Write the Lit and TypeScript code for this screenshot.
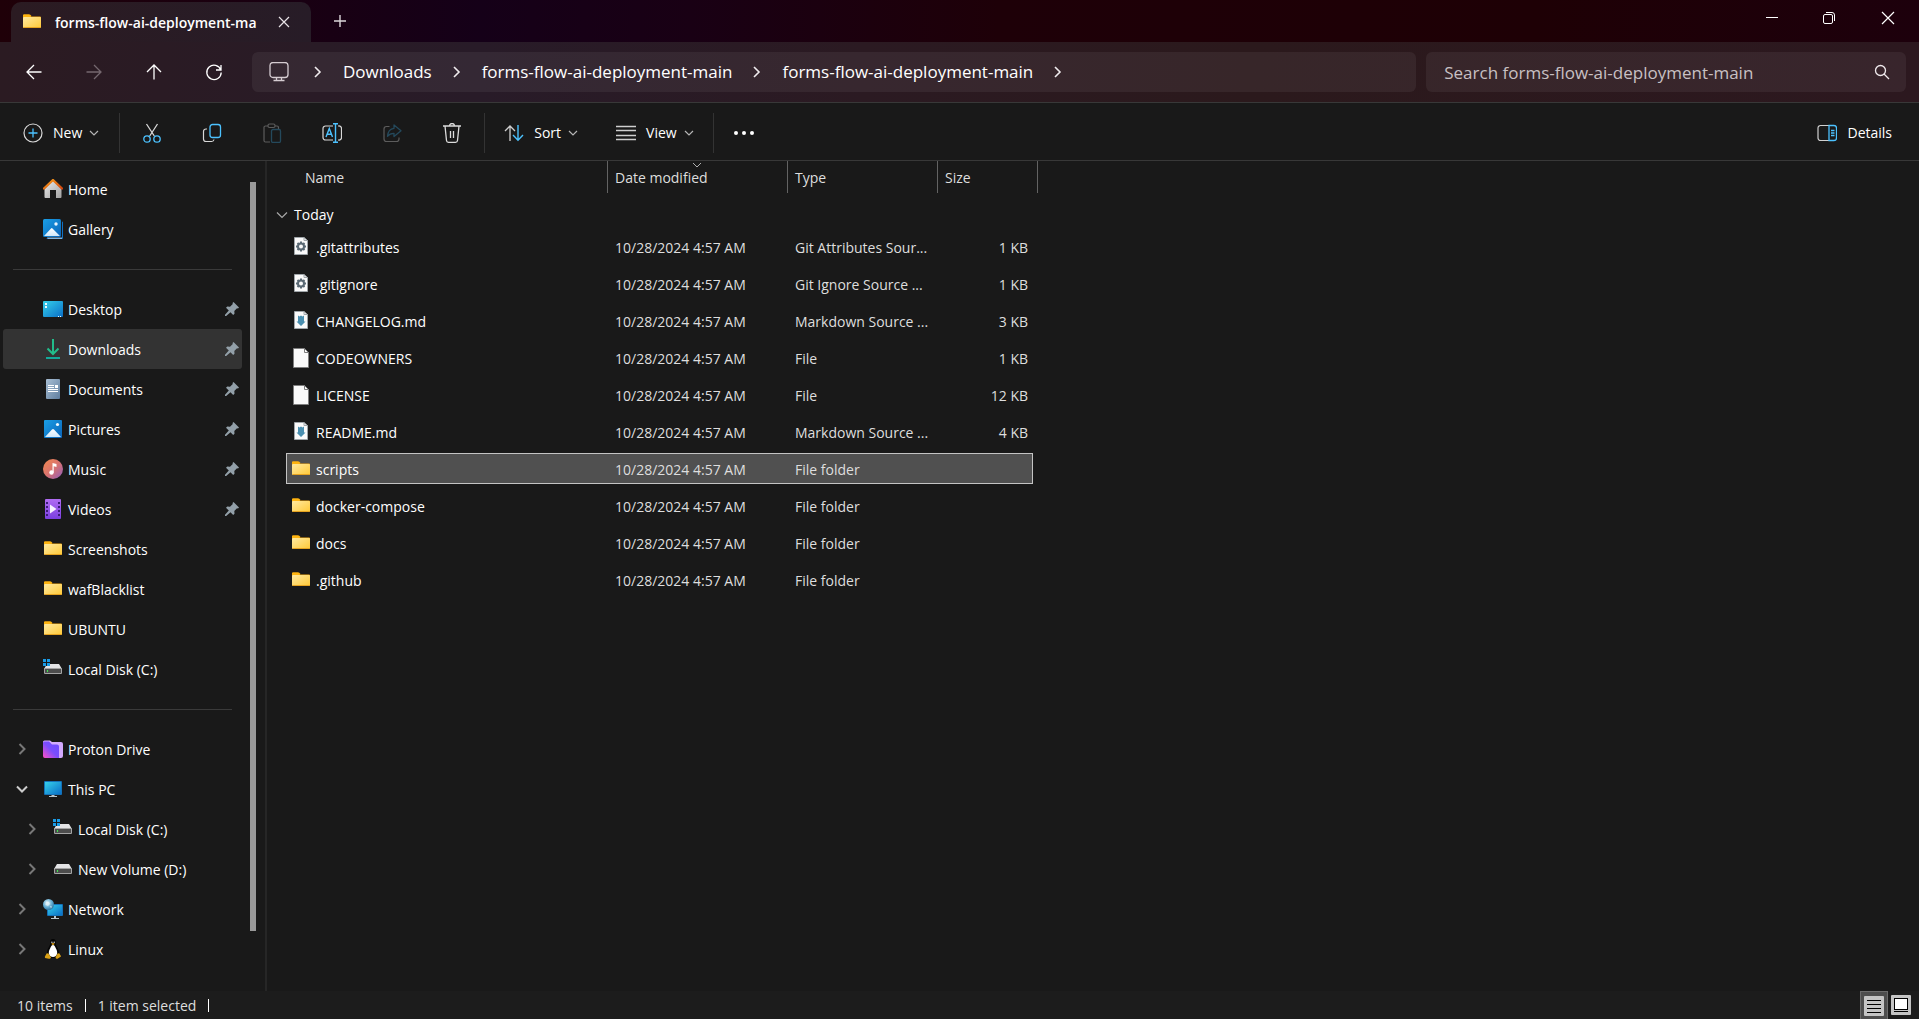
import { LitElement, html, svg, css, nothing, type TemplateResult } from "lit";
import { customElement, state } from "lit/decorators.js";
import { classMap } from "lit/directives/class-map.js";

const BLUE = "#4cc2ff";

/* Gradients shared by the coloured icons. */
const gradients = svg`
  <defs>
    <linearGradient id="g-folder" x1="0" y1="0" x2="1" y2="1"><stop offset="0" stop-color="#ffe9a0"/><stop offset="1" stop-color="#ffc937"/></linearGradient>
    <linearGradient id="g-pic" x1="0" y1="0" x2="1" y2="1"><stop offset="0" stop-color="#1a9fe6"/><stop offset="1" stop-color="#0a63b8"/></linearGradient>
    <linearGradient id="g-hill" x1="0" y1="0" x2="0" y2="1"><stop offset="0" stop-color="#ffffff"/><stop offset="1" stop-color="#cfe8fb"/></linearGradient>
    <linearGradient id="g-desk" x1="0" y1="0" x2="1" y2="1"><stop offset="0" stop-color="#35d0ea"/><stop offset="1" stop-color="#0a6fc8"/></linearGradient>
    <linearGradient id="g-roof" x1="0" y1="0" x2="1" y2="1"><stop offset="0" stop-color="#f8a01c"/><stop offset="1" stop-color="#d4460f"/></linearGradient>
    <linearGradient id="g-wall" x1="0" y1="0" x2="1" y2="1"><stop offset="0" stop-color="#ececec"/><stop offset="1" stop-color="#a2a2a2"/></linearGradient>
    <linearGradient id="g-doc" x1="0" y1="0" x2="1" y2="1"><stop offset="0" stop-color="#a9bfd4"/><stop offset="1" stop-color="#5f7e9f"/></linearGradient>
    <linearGradient id="g-music" x1="0" y1="0" x2="1" y2="1"><stop offset="0" stop-color="#f3894d"/><stop offset=".5" stop-color="#d9736f"/><stop offset="1" stop-color="#8d5bbf"/></linearGradient>
    <linearGradient id="g-video" x1="0" y1="0" x2="0" y2="1"><stop offset="0" stop-color="#b06cf2"/><stop offset="1" stop-color="#7b3fe0"/></linearGradient>
    <linearGradient id="g-proton" x1="0" y1="1" x2="1" y2="0"><stop offset="0" stop-color="#ff50c3"/><stop offset=".5" stop-color="#7a4dff"/><stop offset="1" stop-color="#6d4aff"/></linearGradient>
    <radialGradient id="g-globe" cx=".4" cy=".35" r=".7"><stop offset="0" stop-color="#e3f4fb"/><stop offset=".6" stop-color="#5fa9cf"/><stop offset="1" stop-color="#2c6f9b"/></radialGradient>
  </defs>`;

const windowsMark = svg`<path d="M0 0h3v3H0zM4 0h3v3H4zM0 4h3v3H0zM4 4h3v3H4z" fill="#1a9be6"/>`;
const driveBody = svg`
  <path d="M4 5h12l3 5H1z" fill="#e4e4e6"/>
  <rect x="1" y="9" width="18" height="6" rx="1" fill="#a5a5a5"/>
  <rect x="2" y="10" width="16" height="4" fill="#4d4d4d"/>
  <rect x="4" y="11" width="1" height="2" fill="#3bea4c"/>`;
const smallPage = svg`
  <path d="M3.500 1.500h9.500l3.500 3v14h-13z" fill="#fafafa" stroke="#a0a6aa"/>
  <path d="M13 1.500V4.500h3.500" fill="none" stroke="#a0a6aa"/>`;

const tiny = svg`<path d="M2 4l4 4 4-4" fill="none" stroke="#b5b5b5" stroke-width="1.200"/>`;

const icons: Record<string, TemplateResult> = {
  folder: svg`
    <path d="M1 3.500a1 1 0 0 1 1-1h5l2 2h9a1 1 0 0 1 1 1V9H1z" fill="#f5a913"/>
    <rect x="1" y="5" width="18" height="11" rx="1" fill="url(#g-folder)"/>
    <path d="M1 5h7l1.500-1L8 2.500H2a1 1 0 0 0-1 1z" fill="#ffb40f"/>
    <path d="M1.500 15.500h17" stroke="#e6a320" stroke-width="1"/>`,
  home: svg`
    <path d="M10 1.500L1.500 10v8a1 1 0 0 0 1 1H7v-8h6v8h4.500a1 1 0 0 0 1-1v-8z" fill="url(#g-wall)"/>
    <path d="M1 9.500L10 1l9 8.500" fill="none" stroke="url(#g-roof)" stroke-width="2.400" stroke-linecap="round" stroke-linejoin="round"/>`,
  gallery: svg`
    <path d="M19 2.500a1 1 0 0 1 1 1V19a1 1 0 0 1-1 1H4.500a1 1 0 0 1-1-1H19z" fill="#1272c4"/>
    <path d="M4 18.500h15V20H5z" fill="#7fb4e0"/>
    <rect x="0" y="0" width="18" height="18" rx="1.500" fill="url(#g-pic)"/>
    <path d="M1 17l7-7.500a1 1 0 0 1 1.500 0L17 17z" fill="url(#g-hill)"/>
    <circle cx="13" cy="5" r="1.700" fill="#e8f5ff"/>`,
  desktop: svg`
    <rect x="0" y="2" width="20" height="16" rx="1" fill="url(#g-desk)"/>
    <path d="M2 4h2v2H2zM2 7h2v2H2zM15 17h1v1h-1zM17 17h1v1h-1z" fill="#e9fbff"/>`,
  downloads: svg`
    <path d="M10 0v14.500M4.500 9.500l5.500 5.500 5.500-5.500" fill="none" stroke="#22bd8b" stroke-width="2"/>
    <rect x="3" y="18" width="14" height="2" fill="#14a99a"/>`,
  documents: svg`
    <rect x="3" y="0" width="14" height="20" rx="1" fill="url(#g-doc)"/>
    <path d="M5 6.500h6M5 8.500h6M5 10.500h10M5 12.500h10" stroke="#fff" stroke-width="1"/>
    <rect x="12" y="6" width="3" height="3" fill="#fff"/>`,
  pictures: svg`
    <rect x="1" y="1" width="18" height="18" rx="1" fill="url(#g-pic)"/>
    <path d="M2 18l7-7.500a1.300 1.300 0 0 1 2 0L18 18z" fill="url(#g-hill)"/>
    <circle cx="14.500" cy="5.500" r="1.600" fill="#f2faff"/>`,
  music: svg`
    <circle cx="10" cy="10" r="10" fill="url(#g-music)"/>
    <circle cx="8.500" cy="13.500" r="2.200" fill="#fff"/>
    <path d="M9.500 4l4 1v3l-2.800-.7V13.500H9.500z" fill="#fff"/>`,
  videos: svg`
    <rect x="2" y="0" width="16" height="20" rx="1" fill="url(#g-video)"/>
    <path d="M3 3h2v2H3zM3 7h2v2H3zM3 11h2v2H3zM3 15h2v2H3zM15 3h2v2h-2zM15 7h2v2h-2zM15 11h2v2h-2zM15 15h2v2h-2z" fill="#3b1c78"/>
    <path d="M7 5.500v9l6.500-4.500z" fill="#f6efff"/>`,
  drive: svg`<g>${driveBody}</g>`,
  system: svg`<g>${driveBody}<rect x="0" y="0" width="7" height="7" fill="#191919"/>${windowsMark}</g>`,
  proton: svg`
    <path d="M0 3a1.500 1.500 0 0 1 1.500-1.500H7l2 1.500h9A2 2 0 0 1 20 5v12a2 2 0 0 1-2 2H2z" fill="#d3aaff"/>
    <path d="M0 4a1.500 1.500 0 0 1 1.500-1.500H6l3 3h5a2 2 0 0 1 2 2V19H2a2 2 0 0 1-2-2z" fill="url(#g-proton)"/>`,
  pc: svg`
    <rect x="1" y="2" width="18" height="14" rx="1" fill="#1471b8"/>
    <rect x="2" y="3" width="16" height="12" fill="url(#g-desk)"/>
    <path d="M8.500 16h3v1H14v1H6v-1h2.500z" fill="#b8c4cc"/>`,
  network: svg`
    <rect x="4" y="5" width="16" height="12" rx="1" fill="#1471b8"/>
    <rect x="5" y="6" width="14" height="10" fill="url(#g-desk)"/>
    <path d="M11 17h2v2h3v1H8v-1h3z" fill="#b8c4cc"/>
    <circle cx="5.500" cy="5.500" r="5.500" fill="url(#g-globe)"/>
    <path d="M3 2.500l3 .5 1 2-2 2-2.500-1zM7 7l2 .5-1 2z" fill="#eaf6fb" opacity=".7"/>`,
  linux: svg`
    <path d="M10 0C7.500 0 7 2 7.200 4.500 7.200 7 4 9.500 4 14c0 3 2.500 5 6 5s6-2 6-5c0-4.500-3.200-7-3.200-9.500C13 2 12.500 0 10 0z" fill="#050505"/>
    <path d="M10 6c-1.500 0-2 1.500-2.800 3.200C6 11.500 5.500 13 6 15c.5 2 2 3 4 3s3.500-1 4-3c.5-2 0-3.500-1.200-5.800C12 7.500 11.500 6 10 6z" fill="#fff"/>
    <path d="M8.200 4.800L10 4l1.800.8L10 6.300z" fill="#e5a413"/>
    <circle cx="8.900" cy="3.300" r=".7" fill="#ddd"/><circle cx="11.200" cy="3.300" r=".7" fill="#ddd"/>
    <path d="M3.500 14.500l1.800-.3 2.700 4c0 1-1 1.700-2.200 1.500L2 19c-.5-2 .5-2 .8-3zM16.500 14.500l-1.800-.3-2.200 4c0 1 .8 1.700 2 1.500L18 17.500c0-1-1-1.500-1.500-3z" fill="#d9a015"/>`,
  config: svg`<g transform="translate(0 -1)">${smallPage}
    <circle cx="10" cy="10.500" r="3" fill="none" stroke="#5b6a75" stroke-width="2"/>
    <path d="M10 5.500v2M10 13.500v2M5 10.500h2M13 10.500h2M6.500 7l1.200 1.200M12.300 12.800l1.200 1.200M13.500 7l-1.200 1.200M7.700 12.800L6.500 14" stroke="#5b6a75" stroke-width="2"/></g>`,
  markdown: svg`<g transform="translate(0 -1)">${smallPage}
    <path d="M7 5.500l1.500 1L10 5.500l1.500 1L13 5.500v6h1.500L10 16l-4.500-4.500H7z" fill="#4a8fb0"/></g>`,
  file: svg`
    <path d="M2.500 .5h11l4 4v15h-15z" fill="#fafafa" stroke="#7e7e7e"/>
    <path d="M13.500 .5v4h4" fill="none" stroke="#7e7e7e"/>`,
  pin: svg`<path d="M8.500 0L14 5.500l-1 1-1-.2-2.700 2.700.2 2.700-1.300 1.300L5.500 10.300 1.200 14 0 14l0-1.200 3.800-4.200L1 5.800l1.300-1.300 2.700.2L7.800 2l-.3-1z" fill="#93a0a9"/>`,
  chevron: svg`<path d="M7.500 5l5 5-5 5" fill="none" stroke="currentColor" stroke-width="2"/>`,
  chevronDown: svg`<path d="M5 7.500l5 5 5-5" fill="none" stroke="currentColor" stroke-width="2"/>`,
  crumb: svg`<path d="M8 5l5 5-5 5" fill="none" stroke="#f0ecee" stroke-width="1.600"/>`,
  back: svg`<path d="M17.500 10H3M10 3L3 10l7 7" fill="none" stroke="currentColor" stroke-width="1.300"/>`,
  forward: svg`<path d="M2.500 10H17M10 3l7 7-7 7" fill="none" stroke="currentColor" stroke-width="1.300"/>`,
  up: svg`<path d="M10 17.500V3M3 10l7-7 7 7" fill="none" stroke="currentColor" stroke-width="1.300"/>`,
  refresh: svg`<path d="M16.800 8A7.200 7.200 0 1 0 17.200 10.500M17 3v5h-5" fill="none" stroke="currentColor" stroke-width="1.300"/>`,
  monitor: svg`<rect x="1" y="0.500" width="18" height="15" rx="3" fill="none" stroke="#d5ccd1" stroke-width="1.300"/><path d="M7.500 15.500v2.500M12.500 15.500v2.500M4.500 18.500h11" stroke="#d5ccd1" stroke-width="1.300"/>`,
  search: svg`<circle cx="8.500" cy="8.500" r="5" fill="none" stroke="#f0eaed" stroke-width="1.300"/><path d="M12 12l5 5" stroke="#f0eaed" stroke-width="1.300"/>`,
  close: svg`<path d="M5 5l10 10M15 5L5 15" stroke="#e9e4e7" stroke-width="1.200"/>`,
  winClose: svg`<path d="M4 4l12 12M16 4L4 16" stroke="#fff" stroke-width="1.200"/>`,
  plus: svg`<path d="M10 4v12M4 10h12" stroke="#dcd6da" stroke-width="1.400"/>`,
  minimize: svg`<path d="M4 9.500h12" stroke="#fff"/>`,
  restore: svg`<rect x="4.500" y="6.500" width="9" height="9" rx="1.500" fill="none" stroke="#fff"/><path d="M7 4.500h6a2.500 2.500 0 0 1 2.500 2.500v6" fill="none" stroke="#fff"/>`,
  add: svg`<circle cx="10" cy="10" r="9" fill="none" stroke="#d8d8d8" stroke-width="1.200"/><path d="M10 5.500v9M5.500 10h9" stroke="${BLUE}" stroke-width="1.300"/>`,
  cut: svg`<path d="M4.500 1l7.800 12M15.500 1L7.700 13" fill="none" stroke="#d8d8d8" stroke-width="1.300"/><circle cx="5" cy="16" r="3.200" fill="none" stroke="${BLUE}" stroke-width="1.300"/><circle cx="15" cy="16" r="3.200" fill="none" stroke="${BLUE}" stroke-width="1.300"/>`,
  copy: svg`<path d="M5 6H4a2.500 2.500 0 0 0-2.500 2.500V16A2.500 2.500 0 0 0 4 18.500h5.500A2.500 2.500 0 0 0 12 16.500" fill="none" stroke="#d8d8d8" stroke-width="1.200"/><rect x="8" y="1.500" width="10.500" height="13" rx="2.500" fill="none" stroke="${BLUE}" stroke-width="1.300"/>`,
  paste: svg`<path d="M6 3H3.500A1.500 1.500 0 0 0 2 4.500v13A1.500 1.500 0 0 0 3.500 19H8M13 3h2a1.500 1.500 0 0 1 1.500 1.500V6" fill="none" stroke="#5c5c5c" stroke-width="1.200"/><rect x="6" y="1" width="7" height="3.500" rx="1.500" fill="none" stroke="#5c5c5c" stroke-width="1.200"/><rect x="9.500" y="6.500" width="9" height="13" rx="1.500" fill="none" stroke="#24495c" stroke-width="1.300"/>`,
  rename: svg`<path d="M11 3H3.500A2.500 2.500 0 0 0 1 5.500v9A2.500 2.500 0 0 0 3.500 17H11M16 3h.5A2.500 2.500 0 0 1 19.500 5.500v9A2.500 2.500 0 0 1 16.500 17H16" fill="none" stroke="#d8d8d8" stroke-width="1.200"/><path d="M4 14l3.300-8.500L10.500 14M5.200 11.300h4.200M13.500 1v18M11 .7h5M11 19.300h5" fill="none" stroke="${BLUE}" stroke-width="1.400"/>`,
  share: svg`<path d="M7.500 3.500h-3A2.500 2.500 0 0 0 2 6v10a2.500 2.500 0 0 0 2.500 2.500h10A2.500 2.500 0 0 0 17 16v-1.500" fill="none" stroke="#5c5c5c" stroke-width="1.200"/><path d="M12 2l7 5.800-7 5.700V10.300c-3 0-5 1-6.500 3 .3-4 2.500-7.600 6.500-8z" fill="none" stroke="#24495c" stroke-width="1.300" stroke-linejoin="round"/>`,
  trash: svg`<path d="M1 3h18M3 3l1.500 14.500a2 2 0 0 0 2 1.800h7a2 2 0 0 0 2-1.800L17 3M7.500 3a2.500 2.500 0 0 1 5 0M8.500 8v7M11.500 8v7" fill="none" stroke="#dcdcdc" stroke-width="1.300"/>`,
  sort: svg`<path d="M6 18V3M1 8l5-5 5 5" fill="none" stroke="#cfcfcf" stroke-width="1.300"/><path d="M14 2v15M9 12l5 5.200 5-5.200" fill="none" stroke="${BLUE}" stroke-width="1.400"/>`,
  view: svg`<path d="M0 3.500h20M0 7.500h20M0 12.500h20M0 16.500h20" stroke="#cfcfcf" stroke-width="1.300"/>`,
  more: svg`<circle cx="2" cy="10" r="2" fill="#fff"/><circle cx="10" cy="10" r="2" fill="#fff"/><circle cx="18" cy="10" r="2" fill="#fff"/>`,
  details: svg`<path d="M12 2.500H3.500A2.500 2.500 0 0 0 1 5v10a2.500 2.500 0 0 0 2.500 2.500H12" fill="none" stroke="#d0d0d0" stroke-width="1.200"/><path d="M12 2.500h5A2.500 2.500 0 0 1 19.500 5v10a2.500 2.500 0 0 1-2.500 2.500h-5zM14 7.500h3.500M14 10h3.500M14 12.500h3.500" fill="none" stroke="${BLUE}" stroke-width="1.300"/>`,
  listView: svg`<rect width="20" height="20" rx="1" fill="#c4c4c4"/><path d="M3 4.500h14M3 8.500h14M3 12.500h14M3 16.500h14" stroke="#000"/>`,
  tileView: svg`<rect width="20" height="20" rx="1" fill="#c4c4c4"/><rect x="3.500" y="3.500" width="13" height="11" fill="#fff" stroke="#000"/><path d="M3 16.500h14" stroke="#000"/>`,
};

const icon = (name: string, cls = "icon") =>
  html`<svg class=${cls} viewBox=${name === "pin" ? "0 0 14 14" : "0 0 20 20"} aria-hidden="true">${icons[name]}</svg>`;

interface Place {
  label: string;
  icon: string;
  pinned?: boolean;
  expand?: "open" | "closed";
  nested?: boolean;
}

const groups: Place[][] = [
  [
    { label: "Home", icon: "home" },
    { label: "Gallery", icon: "gallery" },
  ],
  [
    { label: "Desktop", icon: "desktop", pinned: true },
    { label: "Downloads", icon: "downloads", pinned: true },
    { label: "Documents", icon: "documents", pinned: true },
    { label: "Pictures", icon: "pictures", pinned: true },
    { label: "Music", icon: "music", pinned: true },
    { label: "Videos", icon: "videos", pinned: true },
    { label: "Screenshots", icon: "folder" },
    { label: "wafBlacklist", icon: "folder" },
    { label: "UBUNTU", icon: "folder" },
    { label: "Local Disk (C:)", icon: "system" },
  ],
  [
    { label: "Proton Drive", icon: "proton", expand: "closed" },
    { label: "This PC", icon: "pc", expand: "open" },
    { label: "Local Disk (C:)", icon: "system", expand: "closed", nested: true },
    { label: "New Volume (D:)", icon: "drive", expand: "closed", nested: true },
    { label: "Network", icon: "network", expand: "closed" },
    { label: "Linux", icon: "linux", expand: "closed" },
  ],
];

const DATE = "10/28/2024 4:57 AM";
const files = [
  { name: ".gitattributes", icon: "config", type: "Git Attributes Sour...", size: "1 KB" },
  { name: ".gitignore", icon: "config", type: "Git Ignore Source ...", size: "1 KB" },
  { name: "CHANGELOG.md", icon: "markdown", type: "Markdown Source ...", size: "3 KB" },
  { name: "CODEOWNERS", icon: "file", type: "File", size: "1 KB" },
  { name: "LICENSE", icon: "file", type: "File", size: "12 KB" },
  { name: "README.md", icon: "markdown", type: "Markdown Source ...", size: "4 KB" },
  { name: "scripts", icon: "folder", type: "File folder", size: "" },
  { name: "docker-compose", icon: "folder", type: "File folder", size: "" },
  { name: "docs", icon: "folder", type: "File folder", size: "" },
  { name: ".github", icon: "folder", type: "File folder", size: "" },
];

@customElement("app-root")
export class AppRoot extends LitElement {
  @state() private selected = "scripts";

  static styles = css`
    :host {
      display: flex;
      flex-direction: column;
      min-height: 100vh;
      background: #191919;
      color: #fff;
      font: 14px/20px "Open Sans", "Noto Sans", sans-serif;
    }
    * { box-sizing: border-box; }
    button, input { font: inherit; color: inherit; background: none; border: 0; margin: 0; padding: 0; }
    button { display: flex; align-items: center; justify-content: center; }
    a { color: inherit; text-decoration: none; }
    ul, ol { list-style: none; margin: 0; padding: 0; }
    svg { display: block; flex: none; }
    .icon { width: 20px; height: 20px; }
    .defs { position: absolute; width: 0; height: 0; }

    .titlebar {
      display: flex;
      height: 42px;
      padding-left: 11px;
      background: linear-gradient(90deg, #1f0008 0, #150018 25%, #190014 36%, #1e0008 52%, #1e0005 80%, #1d000c 100%);
    }
    .tab {
      display: flex;
      align-items: center;
      width: 300px;
      height: 40px;
      margin-top: 2px;
      padding: 0 17px 0 11px;
      border-radius: 10px 10px 0 0;
      background: linear-gradient(90deg, #2b1b22, #271c27);
    }
    .tab-name {
      flex: 1;
      margin-left: 13px;
      padding-top: 2px;
      white-space: nowrap;
      font-weight: 600;
    }
    .new-tab { width: 58px; }
    .window { display: flex; margin-left: auto; }
    .window button { width: 57px; height: 36px; }
    .window button:last-child { width: 62px; }

    .navbar {
      display: flex;
      align-items: center;
      height: 60px;
      padding: 0 13px 0 4px;
      background: linear-gradient(90deg, #2b1b22 0, #281b28 25%, #2b1a22 45%, #2b191c 65%, #2c181f 100%);
    }
    .navbar > button { width: 60px; height: 40px; }
    .navbar > button:disabled { color: #75686f; }
    .address, .search { display: flex; align-items: center; height: 40px; border-radius: 6px; background: rgba(255, 255, 255, 0.06); font-size: 17px; }
    .address { flex: 1; min-width: 0; margin: 0 10px 0 8px; padding-left: 17px; }
    .crumbs { display: flex; align-items: center; margin-left: 18px; }
    .crumbs li { display: flex; align-items: center; }
    .crumbs a { margin: 0 14px 0 16px; }
    .search { flex: 0 1 25vw; padding: 0 14px 0 18px; }
    .search input { flex: 1; min-width: 0; padding-top: 2px; outline: 0; }
    .search input::placeholder { color: #c8c0c3; opacity: 1; }

    .toolbar {
      display: flex;
      align-items: center;
      height: 59px;
      padding: 2px 27px 0 23px;
      border: solid #383838;
      border-width: 1px 0;
    }
    .labelled { gap: 10px; height: 40px; }
    .mini { width: 12px; height: 12px; margin-left: -4px; }
    .bar { width: 1px; height: 40px; background: #333; }
    .tools { display: flex; padding: 0 2px; }
    .tools button { width: 60px; height: 40px; }
    .create { padding-right: 19px; }
    .sorting { display: flex; gap: 37px; padding: 0 18px 0 19px; }
    .overflow { width: 61px; height: 40px; }
    .details { margin-left: auto; }

    .body { display: flex; flex: 1; }
    .sidebar { width: 242px; padding: 8px 0 0 3px; }
    .place { display: flex; align-items: center; height: 40px; padding: 0 3px 0 9px; border-radius: 3px; }
    .place.nested { padding-left: 19px; }
    .place.current { background: #333; }
    .twist { width: 20px; height: 20px; color: #777; margin-right: 11px; }
    .twist.open { color: #ccc; }
    .place a { display: flex; align-items: center; gap: 5px; flex: 1; height: 40px; }
    .place a span, .file-name span { padding-top: 2px; }
    .pin { width: 14px; height: 14px; }
    .divider { height: 40px; padding: 20px 10px 0; }
    .divider::before { content: ""; display: block; height: 1px; background: #3a3a3a; }
    .track { width: 25px; padding: 21px 10px 60px 8px; border-right: 2px solid #262626; display: flex; }
    .thumb { flex: 1; min-width: 6px; background: #999; margin-right: -1px; }

    .main { flex: 1; min-width: 0; padding-left: 19px; }
    table { width: 747px; table-layout: fixed; border-collapse: separate; border-spacing: 0 6px; margin-top: -6px; }
    .col-date { width: 180px; }
    .col-type { width: 150px; }
    .col-size { width: 96px; }
    th, td { padding: 2px 0 0 8px; font-weight: 400; text-align: left; white-space: nowrap; color: #dedede; }
    thead th { position: relative; height: 32px; border-left: 1px solid #636363; padding-left: 7px; }
    thead th:first-child { border-left: 0; padding-left: 19px; }
    thead th:last-child::after { content: ""; position: absolute; left: 99px; top: 0; bottom: 0; width: 1px; background: #636363; }
    .sorted { position: absolute; left: 82px; top: -3px; width: 14px; height: 14px; }
    .group { height: 26px; padding: 6px 0 0; }
    .group button { gap: 5px; color: #fff; height: 20px; margin-left: -11px; }
    .group .mini { width: 14px; height: 14px; margin: 0; }
    tbody td { height: 31px; }
    .file-name { padding: 0 0 0 5px; color: #fff; }
    .file-name div { display: flex; align-items: center; gap: 5px; }
    .size { text-align: right; padding-right: 5px; }
    .selected { background: #505050; outline: 1px solid #c4c4c4; outline-offset: -1px; }

    .status { display: flex; align-items: center; height: 28px; padding: 0 8px 0 17px; background: #1c1c1c; color: #dedede; }
    .status > span { padding-top: 2px; }
    .status .tick { width: 1px; height: 13px; padding: 0; margin: 0 12px; background: #fff; }
    .views { display: flex; align-items: center; margin-left: auto; gap: 3px; }
    .views button { height: 28px; }
    .views .active { width: 28px; background: #4d4d4d; border: 1px solid #6b6b6b; border-bottom: 0; }
  `;

  private renderPlace(p: Place) {
    const current = p.label === "Downloads";
    return html`<li class=${classMap({ place: true, nested: !!p.nested, current })}>
      ${p.expand
        ? html`<button class="twist ${p.expand}" aria-label=${p.label} aria-expanded=${p.expand === "open"}>
            ${icon(p.expand === "open" ? "chevronDown" : "chevron")}
          </button>`
        : html`<span class="twist"></span>`}
      <a href="#">${icon(p.icon)}<span>${p.label}</span></a>
      ${p.pinned ? icon("pin", "pin") : nothing}
    </li>`;
  }

  private labelled(name: string, label: string) {
    return html`<button class="labelled">
      ${icon(name)}<span>${label}</span><svg class="mini" viewBox="0 0 12 12" aria-hidden="true">${tiny}</svg>
    </button>`;
  }

  render() {
    const tools = ["cut", "copy", "paste", "rename", "share", "trash"];
    return html`
      <svg class="defs" aria-hidden="true">${gradients}</svg>
      <header class="titlebar">
        <div class="tab">
          ${icon("folder")}<span class="tab-name">forms-flow-ai-deployment-ma</span>
          <button aria-label="Close tab">${icon("close")}</button>
        </div>
        <button class="new-tab" aria-label="New tab">${icon("plus")}</button>
        <div class="window">
          <button aria-label="Minimize">${icon("minimize")}</button>
          <button aria-label="Restore">${icon("restore")}</button>
          <button aria-label="Close">${icon("winClose")}</button>
        </div>
      </header>

      <div class="navbar">
        <button aria-label="Back">${icon("back")}</button>
        <button aria-label="Forward" disabled>${icon("forward")}</button>
        <button aria-label="Up">${icon("up")}</button>
        <button aria-label="Refresh">${icon("refresh")}</button>
        <nav class="address" aria-label="Address">
          ${icon("monitor")}
          <ol class="crumbs">
            <li>${icon("crumb")}</li>
            ${["Downloads", "forms-flow-ai-deployment-main", "forms-flow-ai-deployment-main"].map(
              (c) => html`<li><a href="#">${c}</a>${icon("crumb")}</li>`,
            )}
          </ol>
        </nav>
        <div class="search">
          <input type="search" aria-label="Search" placeholder="Search forms-flow-ai-deployment-main" />
          ${icon("search")}
        </div>
      </div>

      <div class="toolbar" role="toolbar">
        <div class="create">${this.labelled("add", "New")}</div>
        <span class="bar"></span>
        <div class="tools">
          ${tools.map((t) => html`<button aria-label=${t} ?disabled=${t === "paste" || t === "share"}>${icon(t)}</button>`)}
        </div>
        <span class="bar"></span>
        <div class="sorting">${this.labelled("sort", "Sort")}${this.labelled("view", "View")}</div>
        <span class="bar"></span>
        <button class="overflow" aria-label="See more">${icon("more")}</button>
        <button class="labelled details">${icon("details")}<span>Details</span></button>
      </div>

      <div class="body">
        <nav class="sidebar" aria-label="Places">
          ${groups.map(
            (g, i) => html`${i ? html`<div class="divider"></div>` : nothing}
              <ul>${g.map((p) => this.renderPlace(p))}</ul>`,
          )}
        </nav>
        <div class="track"><div class="thumb"></div></div>

        <main class="main">
          <table>
            <colgroup><col /><col class="col-date" /><col class="col-type" /><col class="col-size" /></colgroup>
            <thead>
              <tr>
                <th scope="col">Name</th>
                <th scope="col" aria-sort="descending">
                  <svg class="sorted" viewBox="0 0 14 14" aria-hidden="true"><path d="M3 5l4 4 4-4" fill="none" stroke="#b0b0b0"/></svg>Date modified
                </th>
                <th scope="col">Type</th>
                <th scope="col">Size</th>
              </tr>
            </thead>
            <tbody>
              <tr>
                <th class="group" colspan="4" scope="rowgroup">
                  <button aria-expanded="true">
                    <svg class="mini" viewBox="0 0 14 14" aria-hidden="true"><path d="M2 4.500l5 5 5-5" fill="none" stroke="#a8a8a8" stroke-width="1.200"/></svg>Today
                  </button>
                </th>
              </tr>
              ${files.map(
                (f) => html`<tr class=${classMap({ selected: f.name === this.selected })} @click=${() => (this.selected = f.name)}>
                  <td class="file-name"><div>${icon(f.icon)}<span>${f.name}</span></div></td>
                  <td>${DATE}</td>
                  <td>${f.type}</td>
                  <td class="size">${f.size}</td>
                </tr>`,
              )}
            </tbody>
          </table>
        </main>
      </div>

      <footer class="status">
        <span>10 items</span><span class="tick"></span>
        <span>1 item selected</span><span class="tick"></span>
        <div class="views">
          <button class="active" aria-label="Details view">${icon("listView")}</button>
          <button aria-label="Large icons view">${icon("tileView")}</button>
        </div>
      </footer>
    `;
  }
}
